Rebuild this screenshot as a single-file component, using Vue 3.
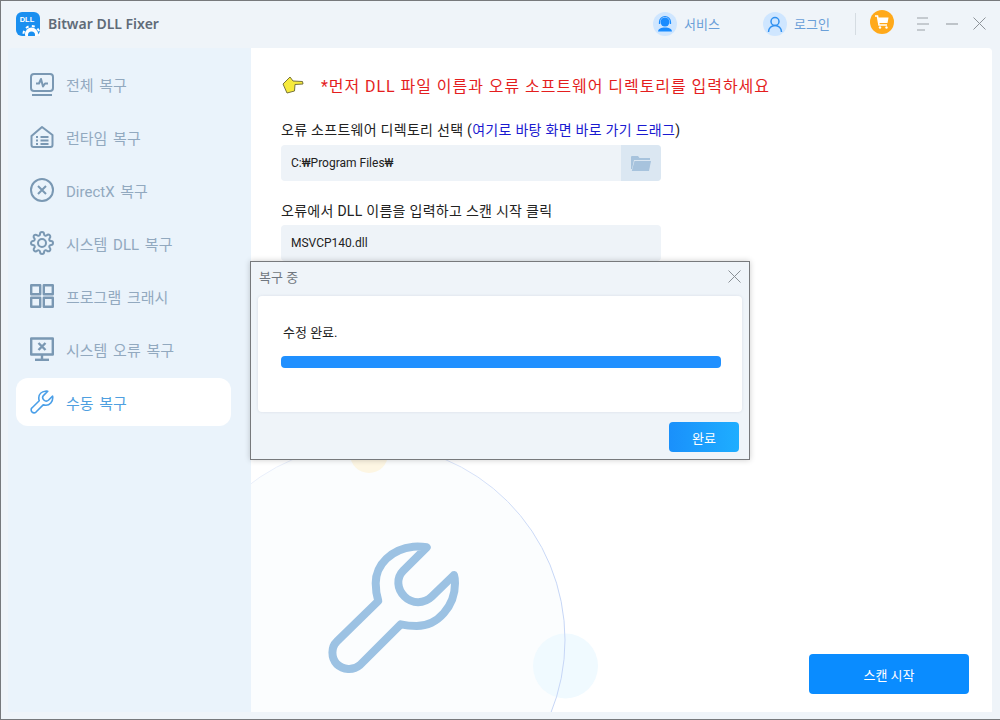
<template>
  <div class="window">
    <header class="titlebar">
      <div class="brand">
        <svg class="logo" viewBox="0 0 24 24" width="24" height="24">
          <rect width="24" height="24" rx="6" fill="#1a8ff0" />
          <text x="11" y="10" text-anchor="middle" class="logo-text">DLL</text>
          <circle cx="15.500" cy="22" r="6.500" fill="#fff" />
          <circle cx="15.500" cy="22" r="8" fill="none" stroke="#fff" stroke-width="2" stroke-dasharray="3 3.300" />
          <circle cx="15.500" cy="23" r="3.500" fill="#1a8ff0" />
        </svg>
        <span class="app-name">Bitwar DLL Fixer</span>
      </div>
      <div class="top-actions">
        <a class="top-link service">
          <span class="round-icon">
            <svg viewBox="0 0 24 24" width="24" height="24">
              <circle cx="12" cy="10" r="4.500" fill="#1a8cff" />
              <path d="M6.500 12V10a5.500 5.500 0 0 1 11 0v2" fill="none" stroke="#1a8cff" stroke-width="1.200" />
              <path d="M5 19.500c.5-3 3-4 7-4s6.500 1 7 4Z" fill="#1a8cff" />
            </svg>
          </span>
          <span>서비스</span>
        </a>
        <a class="top-link login">
          <span class="round-icon">
            <svg viewBox="0 0 24 24" width="24" height="24">
              <circle cx="12" cy="9.500" r="4" fill="none" stroke="#2f90f0" stroke-width="1.500" />
              <path d="M5.500 20c0-4 3-6.500 6.500-6.500s6.500 2.500 6.500 6.500" fill="none" stroke="#2f90f0" stroke-width="1.500" />
            </svg>
          </span>
          <span>로그인</span>
        </a>
        <span class="divider"></span>
        <span class="cart">
          <svg viewBox="0 0 24 24" width="24" height="24">
            <path d="M5 6h2.500l1.500 9h8" fill="none" stroke="#fff" stroke-width="1.600" />
            <path d="M8 7.500h10.500l-1 5.500H9Z" fill="#fff" />
            <circle cx="10" cy="17.500" r="1.200" fill="#fff" />
            <circle cx="16.500" cy="17.500" r="1.200" fill="#fff" />
          </svg>
        </span>
        <svg class="win-btn menu" viewBox="0 0 13 14" width="13" height="14">
          <path d="M0 1h11M0 7h12M0 13h8" stroke="#9aa0a6" stroke-width="1" fill="none" />
        </svg>
        <svg class="win-btn minimize" viewBox="0 0 12 2" width="12" height="2">
          <path d="M0 1h12" stroke="#8d9399" stroke-width="1" fill="none" />
        </svg>
        <svg class="win-btn close" viewBox="0 0 13 13" width="13" height="13">
          <path d="M.5.500l12 12M12.500.500l-12 12" stroke="#8d9399" stroke-width="1" fill="none" />
        </svg>
      </div>
    </header>

    <div class="body">
      <nav class="sidebar">
        <a v-for="item in navItems" :key="item.label" class="nav-item" :class="{ active: item.active }">
          <svg class="nav-icon" :viewBox="item.box || '0 0 24 24'" width="24" height="24">
            <path v-for="d in item.paths" :key="d" :d="d" fill="none" stroke="currentColor" :stroke-width="item.sw" stroke-linejoin="round" />
          </svg>
          <span>{{ item.label }}</span>
        </a>
      </nav>

      <main class="main">
        <svg class="decor" viewBox="251 48 741 664" width="741" height="664">
          <defs>
            <linearGradient id="ring" x1="0" y1="0" x2="1" y2="0.300">
              <stop offset="0" stop-color="#eef3fb" />
              <stop offset="0.500" stop-color="#e3eafa" />
              <stop offset="1" stop-color="#c6d6f6" />
            </linearGradient>
          </defs>
          <circle cx="369" cy="640" r="196" fill="#fbfdfe" />
          <circle cx="369" cy="454" r="19" fill="#fdf6e3" />
          <circle cx="565.500" cy="666" r="32.500" fill="#f0faff" />
          <circle cx="369" cy="640" r="196" fill="none" stroke="url(#ring)" stroke-width="1" />
          <path :d="wrenchPath" fill="none" stroke="#9cc2e3" stroke-width="8" stroke-linejoin="round" stroke-linecap="round" />
        </svg>

        <div class="notice">
          <svg class="hand" viewBox="0 0 22 18" width="22" height="18">
            <path d="M8 1 11 5 20.500 5.500 21 8 13 8.500 12.500 15 5 17 1 8Z" fill="#f6ea3c" stroke="#77733a" stroke-width="1" stroke-linejoin="round" />
          </svg>
          <span>*먼저 DLL 파일 이름과 오류 소프트웨어 디렉토리를 입력하세요</span>
        </div>

        <label class="field-label">오류 소프트웨어 디렉토리 선택 (<span class="hint">여기로 바탕 화면 바로 가기 드래그</span>)</label>
        <div class="field">
          <span class="field-value">C:₩Program Files₩</span>
          <span class="folder-btn">
            <svg viewBox="0 0 20 18" width="20" height="18">
              <path d="M0 3a1 1 0 0 1 1-1h6l1.500 2H19v2H3L1 15H0Z" fill="#a7c3dd" />
              <path d="M3.500 7H20l-2 10H0.800Z" fill="#a7c3dd" />
            </svg>
          </span>
        </div>

        <label class="field-label second">오류에서 DLL 이름을 입력하고 스캔 시작 클릭</label>
        <div class="field">
          <span class="field-value">MSVCP140.dll</span>
        </div>

        <button class="scan-btn">스캔 시작</button>
      </main>
    </div>

    <section class="dialog">
      <div class="dialog-head">
        <span>복구 중</span>
        <svg viewBox="0 0 13 13" width="13" height="13">
          <path d="M.5.500l12 12M12.500.500l-12 12" stroke="#8a9096" stroke-width="1" fill="none" />
        </svg>
      </div>
      <div class="dialog-panel">
        <p class="status">수정 완료.</p>
        <div class="progress"></div>
      </div>
      <div class="dialog-foot">
        <button class="done-btn">완료</button>
      </div>
    </section>
  </div>
</template>

<script setup>
const wrenchPath = 'M426.700 547.300C422 546.500 417 546.500 413.300 546.700C392 549 375.700 564 375.700 583.300C375.700 589 376.500 595 378.300 601L336.700 641.700C331 647 331 658 336.700 664C343 670 353 671 360 665L400.700 624.300C406 625.500 411 626 416.700 626C438 626 455 606 455 583.300C455 580 454.700 577 454 575L431.700 596.700C424 604 412 604 404.500 596.500C397 589 396 578 403.300 570.700Z'

const navItems = [
  {
    label: '전체 복구',
    sw: 2,
    paths: ['M4 2h16a3 3 0 0 1 3 3v11a3 3 0 0 1-3 3H4a3 3 0 0 1-3-3V5a3 3 0 0 1 3-3Z', 'M2 23h20', 'M6 11.500h3l2-4.500 2 7.500 2-3h3'],
  },
  {
    label: '런타임 복구',
    sw: 2,
    paths: ['M1.500 11 12 2l10.500 8V20a2 2 0 0 1-2 2H3.500a2 2 0 0 1-2-2Z', 'M6 12h2M10.500 12h8M6 15.500h2M10.500 15.500h8M6 19h2M10.500 19h8'],
  },
  {
    label: 'DirectX 복구',
    sw: 2,
    paths: ['M12 1a11 11 0 1 0 0 22 11 11 0 0 0 0-22Z', 'M8 8l8 8M16 8l-8 8'],
  },
  {
    label: '시스템 DLL 복구',
    sw: 2,
    paths: [
      'M19.400 15a1.650 1.650 0 0 0 .33 1.820l.06.06a2 2 0 0 1 0 2.830 2 2 0 0 1-2.830 0l-.06-.06a1.650 1.650 0 0 0-1.820-.33 1.650 1.650 0 0 0-1 1.510V21a2 2 0 0 1-2 2 2 2 0 0 1-2-2v-.09A1.650 1.650 0 0 0 9 19.400a1.650 1.650 0 0 0-1.820.33l-.06.06a2 2 0 0 1-2.830 0 2 2 0 0 1 0-2.830l.06-.06a1.650 1.650 0 0 0 .33-1.820 1.650 1.650 0 0 0-1.510-1H3a2 2 0 0 1-2-2 2 2 0 0 1 2-2h.09A1.650 1.650 0 0 0 4.600 9a1.650 1.650 0 0 0-.33-1.820l-.06-.06a2 2 0 0 1 0-2.830 2 2 0 0 1 2.830 0l.06.06a1.650 1.650 0 0 0 1.820.33H9a1.650 1.650 0 0 0 1-1.510V3a2 2 0 0 1 2-2 2 2 0 0 1 2 2v.09a1.650 1.650 0 0 0 1 1.510 1.650 1.650 0 0 0 1.820-.33l.06-.06a2 2 0 0 1 2.830 0 2 2 0 0 1 0 2.830l-.06.06a1.650 1.650 0 0 0-.33 1.820V9a1.650 1.650 0 0 0 1.510 1H21a2 2 0 0 1 2 2 2 2 0 0 1-2 2h-.09a1.650 1.650 0 0 0-1.510 1Z',
      'M12 8a4 4 0 1 0 0 8 4 4 0 0 0 0-8Z',
    ],
  },
  {
    label: '프로그램 크래시',
    sw: 2.4,
    paths: ['M1.200 1.200h9v9h-9Z', 'M13.800 1.200h9v9h-9Z', 'M1.200 13.800h9v9h-9Z', 'M13.800 13.800h9v9h-9Z'],
  },
  {
    label: '시스템 오류 복구',
    sw: 2.4,
    paths: ['M1.200 1.500h21.600v16H1.200Z', 'M8.500 6l7 7M15.500 6l-7 7', 'M12 17.500v5', 'M5 22.800h14'],
  },
  {
    label: '수동 복구',
    sw: 9,
    active: true,
    box: '326 540 136 136',
    paths: ['M426.700 547.300C422 546.500 417 546.500 413.300 546.700C392 549 375.700 564 375.700 583.300C375.700 589 376.500 595 378.300 601L336.700 641.700C331 647 331 658 336.700 664C343 670 353 671 360 665L400.700 624.300C406 625.500 411 626 416.700 626C438 626 455 606 455 583.300C455 580 454.700 577 454 575L431.700 596.700C424 604 412 604 404.500 596.500C397 589 396 578 403.300 570.700Z'],
  },
]
</script>

<style>
html, body {
  margin: 0;
  background: #eff4f9;
}
</style>

<style scoped>
.window {
  position: relative;
  box-sizing: border-box;
  width: 1000px;
  height: 720px;
  display: flex;
  flex-direction: column;
  background: #eff4f9;
  border-top: 1px solid #77797c;
  border-left: 1px solid #77797c;
  border-bottom: 1px solid #77797c;
  font-family: Roboto, "Noto Sans CJK KR", sans-serif;
  overflow: hidden;
}

.titlebar {
  flex: 0 0 47px;
  box-sizing: border-box;
  display: flex;
  align-items: center;
  justify-content: space-between;
  padding: 0 14px 2px 15px;
}

.brand {
  display: flex;
  align-items: center;
  gap: 8px;
}

.logo-text {
  font-family: "Liberation Sans", sans-serif;
  font-size: 7.500px;
  font-weight: 700;
  fill: #fff;
}

.app-name {
  font-family: "Noto Sans", sans-serif;
  font-size: 14px;
  font-weight: 600;
  color: #5f6b78;
}

.top-actions {
  display: flex;
  align-items: center;
}

.top-link {
  display: flex;
  align-items: center;
  gap: 7px;
  font-size: 13px;
  color: #6a9fd8;
  white-space: nowrap;
}

.top-link.service {
  width: 110px;
}

.top-link.login {
  width: 92px;
}

.round-icon {
  width: 24px;
  height: 24px;
  border-radius: 50%;
  background: #cfe6ff;
}

.round-icon svg,
.cart svg {
  display: block;
}

.divider {
  width: 1px;
  height: 22px;
  background: #d5dce2;
  margin-right: 14px;
}

.cart {
  width: 24px;
  height: 24px;
  border-radius: 50%;
  background: #ffa91a;
  margin-top: -4px;
  margin-right: 23px;
}

.win-btn {
  display: block;
}

.minimize {
  margin-left: 16px;
}

.close {
  margin-left: 15px;
}

.body {
  flex: 1;
  min-height: 0;
  display: flex;
  padding: 0 8px 7px 7px;
}

.sidebar {
  flex: 0 0 243px;
  box-sizing: border-box;
  background: #eaf3fb;
  padding: 12px 20px 0 8px;
  display: flex;
  flex-direction: column;
  gap: 5px;
  border-radius: 4px 0 0 0;
}

.nav-item {
  height: 48px;
  display: flex;
  align-items: center;
  gap: 12px;
  padding-left: 14px;
  border-radius: 12px;
  font-size: 15px;
  color: #92a9bf;
  word-spacing: 2px;
}

.nav-icon {
  flex: none;
  color: #7a98b3;
}

.nav-item.active {
  background: #fff;
  color: #4f9fe0;
}

.nav-item.active .nav-icon {
  color: #4a9fe8;
}

.main {
  flex: 1;
  position: relative;
  background: #fff;
  border-radius: 0 4px 0 0;
  overflow: hidden;
  display: flex;
  flex-direction: column;
  align-items: flex-start;
  padding: 26px 23px 18px 30px;
}

.decor {
  position: absolute;
  left: 0;
  top: 0;
}

.notice,
.field-label,
.field,
.scan-btn {
  position: relative;
}

.notice {
  display: flex;
  align-items: center;
  gap: 17px;
  height: 22px;
  margin-left: 1px;
  font-size: 16px;
  letter-spacing: 0.95px;
  color: #e41e1e;
}

.field-label {
  margin-top: 24px;
  font-size: 14px;
  line-height: 20px;
  letter-spacing: 0.28px;
  color: #222;
}

.field-label.second {
  margin-top: 20px;
}

.hint {
  color: #1a1ad0;
}

.field {
  box-sizing: border-box;
  width: 380px;
  height: 36px;
  margin-top: 5px;
  display: flex;
  align-items: center;
  justify-content: space-between;
  background: #eef3f8;
  border-radius: 4px;
  overflow: hidden;
}

.field-label.second + .field {
  margin-top: 4px;
}

.field-value {
  padding-left: 10px;
  font-size: 12px;
  color: #222;
}

.folder-btn {
  width: 40px;
  height: 36px;
  display: flex;
  align-items: center;
  justify-content: center;
  background: #dbe7f2;
}

.scan-btn {
  width: 160px;
  height: 40px;
  margin-top: auto;
  align-self: flex-end;
  border: 0;
  border-radius: 4px;
  background: #0a8cff;
  color: #fff;
  font: inherit;
  font-size: 13px;
}

.dialog {
  position: absolute;
  left: 249px;
  top: 260px;
  box-sizing: border-box;
  width: 500px;
  height: 199px;
  background: #eff4f9;
  border: 1px solid #77797c;
  box-shadow: 0 0 6px rgba(0, 0, 0, 0.2);
  padding: 0 7px;
}

.dialog-head {
  box-sizing: border-box;
  height: 34px;
  display: flex;
  align-items: center;
  justify-content: space-between;
  padding: 0 1px 5px;
  font-size: 13px;
  color: #6f7780;
}

.dialog-panel {
  box-sizing: border-box;
  height: 116px;
  background: #fff;
  border-radius: 4px;
  padding: 28px 21px 0 25px;
  box-shadow: 0 0 3px rgba(120, 140, 160, 0.2);
}

.status {
  margin: 0;
  font-size: 13px;
  line-height: 18px;
  color: #222;
}

.progress {
  width: 440px;
  height: 12px;
  margin: 14px 0 0 -2px;
  border-radius: 4px;
  background: #2090ff;
}

.dialog-foot {
  display: flex;
  justify-content: flex-end;
  padding: 10px 3px 0 0;
}

.done-btn {
  width: 70px;
  height: 30px;
  border: 0;
  border-radius: 4px;
  background: linear-gradient(90deg, #1a90fb, #1eaeff);
  color: #fff;
  font: inherit;
  font-size: 13px;
}
</style>
